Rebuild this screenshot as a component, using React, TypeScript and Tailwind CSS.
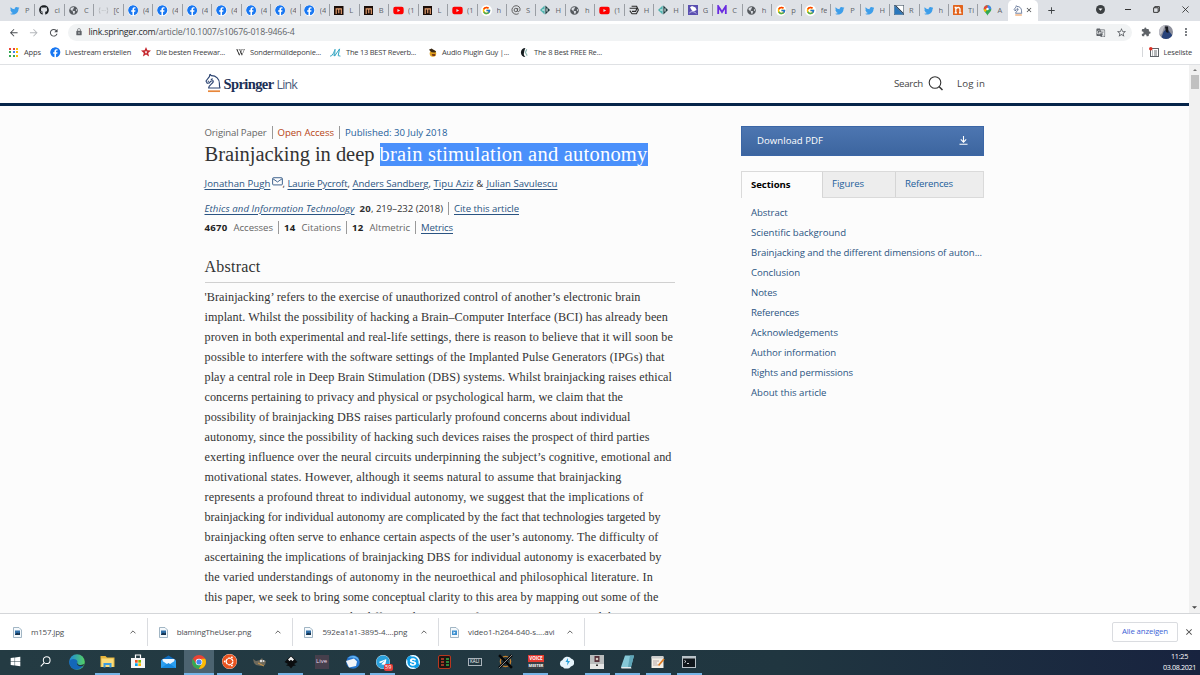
import { useLayoutEffect, useRef, type ReactNode } from "react";
import { FaGithub, FaFacebook, FaTwitter, FaYoutube, FaGlobeAmericas, FaWikipediaW, FaSkype, FaTelegram, FaUbuntu, FaWindows } from "react-icons/fa";
import { FcGoogle } from "react-icons/fc";
import { MdLock, MdExtension, MdStarBorder, MdGTranslate, MdMoreVert, MdArrowBack, MdArrowForward, MdRefresh, MdAdd, MdClose } from "react-icons/md";

const SERIF = "font-['Liberation_Serif',serif]";

/** Text tracked so that it fills exactly `w` pixels. */
function Fit({ w, className = "", children }: { w: number; className?: string; children: ReactNode }) {
  const ref = useRef<HTMLSpanElement>(null);
  useLayoutEffect(() => {
    const el = ref.current;
    if (!el) return;
    el.style.letterSpacing = "0px";
    const natural = el.getBoundingClientRect().width;
    const count = (el.textContent ?? "").length || 1;
    el.style.letterSpacing = `${(w - natural) / count}px`;
  }, [w, children]);
  return (
    <span className="inline-block shrink-0 whitespace-nowrap" style={{ width: w }}>
      <span ref={ref} className={`inline-block whitespace-pre ${className}`}>{children}</span>
    </span>
  );
}

const Knight = ({ className = "" }: { className?: string }) => (
  <svg viewBox="0 0 16 20" className={className} fill="none">
    <path d="M5 1.2 6.2 2.6C11 2.4 14.6 6 14.4 10.5c-.1 2 .1 3 .6 4.5H3.6c0-3.2 4.2-3.700 5-7M5 1.2 4.4 3.6 1 8l1.2 2.3 2.2-.4 1.4-1.7 2.7-.7M7.8 5.8l-2 .8M2.8 8.5l1-.4" stroke="#2c4472" strokeWidth="1.15" strokeLinejoin="round" />
    <path d="M3 18.2h12" stroke="#e8873a" strokeWidth="1.7" />
  </svg>
);

const MIcon = () => (
  <svg viewBox="0 0 10 10" className="size-[9.5px]">
    <rect width="10" height="10" fill="#1a0d08" />
    <path d="M2.300 8.500V3h5.400v5.500M5 3v4.500" stroke="#e8a070" strokeWidth="1.200" fill="none" />
  </svg>
);
const Diamond = () => (
  <svg viewBox="0 0 10 10" className="size-[10px]">
    <path d="M4.6.4v9.2L0 5z" fill="#4fb3ae" />
    <path d="M5.4.4v9.2L10 5z" fill="#18383b" />
    <path d="M2.2 5h2.2M7 3.4v3.2" stroke="#fff" />
  </svg>
);
const Poly = () => (
  <svg viewBox="0 0 10 10" className="size-[10px]" fill="none" stroke="#2b2b2b" strokeWidth="1.1">
    <path d="M2.600 1.200h5L9.400 5 7.400 8.800H3L.8 5.600M.6 3.200h7.400L6.600 6.400H3" />
  </svg>
);
const At = () => (
  <svg viewBox="0 0 10 10" className="size-[10px]" fill="none" stroke="#555" strokeWidth=".9">
    <circle cx="4.8" cy="5" r="1.7" />
    <path d="M6.8 3 6.4 6c.3 1 2 .8 2.6-.8C9.6 2.4 7.4.7 5 .7a4.3 4.3 0 1 0 2.6 7.9" />
  </svg>
);
const Ghost = () => (
  <svg viewBox="0 0 10 10" className="size-[10px]">
    <rect width="10" height="10" fill="#5a4fb0" />
    <path d="M2 2.200 4 1l3.500 1.600L8.600 5 6 6.200 4 5.800z" fill="#fff" />
    <path d="M1.400 8c2-2.200 5-1.600 7 .6" stroke="#cbc6f2" fill="none" />
  </svg>
);
const PurpleM = () => (
  <svg viewBox="0 0 10 10" className="size-[10px]"><path d="M1.2 9V1.2L5 7l3.8-5.8V9" stroke="#6a2be0" strokeWidth="1.8" fill="none" /></svg>
);
const Corner = () => (
  <svg viewBox="0 0 10 10" className="size-[10px]">
    <rect x=".3" y=".3" width="9.4" height="9.4" fill="#fff" stroke="#4a5a68" strokeWidth=".6" />
    <path d="M.5.500 9.500 9.500h-9z" fill="#2b78bd" /><path d="M.5.500 9.500 9.500V8L2 .5z" fill="#16324f" />
  </svg>
);
const OrangeN = () => (
  <svg viewBox="0 0 10 10" className="size-[10px]">
    <rect width="10" height="10" rx=".5" fill="#e2631c" />
    <path d="M1.6 2.500h1.200v5.400M2.800 4C4 2 7 2 7 4v3.900M1.600 7.800H4M6 7.800h2.400" stroke="#fff" strokeWidth="1.3" fill="none" />
  </svg>
);
const Pin = () => (
  <svg viewBox="0 0 10 12" className="h-[11px] w-[9px]">
    <path d="M5 .3C2.400.3.8 2.300.8 4.500.8 7.500 4.200 8.500 5 11.800 5.800 8.500 9.200 7.500 9.200 4.500 9.200 2.300 7.600.3 5 .3z" fill="#34a853" />
    <path d="M5 .3C7.600.3 9.200 2.300 9.200 4.500L5 4.500z" fill="#4285f4" />
    <path d="M5 .3C2.400.3.8 2.300.8 4.500L5 4.500z" fill="#ea4335" />
    <path d="M.8 4.500C.8 6 1.600 6.800 2.600 7.800L5 4.500z" fill="#fbbc04" />
    <circle cx="5" cy="4.300" r="1.400" fill="#fff" />
  </svg>
);
const Json = () => (
  <svg viewBox="0 0 12 8" className="h-[7px] w-[11px]" fill="none" stroke="#b5b8bc" strokeWidth=".9"><path d="M2.500 1H1.500v2.400L.7 4l.8.6V7h1M9.500 1h1v2.400l.8.600-.8.600V7h-1M4 4h1M6 4h1M8 4h.6" /></svg>
);
const Tw = () => <FaTwitter className="size-[9.5px] text-[#3d9eea]" />;
const Fb = () => <FaFacebook className="size-[10.5px] rounded-full bg-white text-[#1877f2]" />;
const Yt = () => <FaYoutube className="size-[11px] text-[#f00]" />;
const Goog = () => <span className="flex size-[10.5px] items-center justify-center rounded-full bg-white"><FcGoogle className="size-[9px]" /></span>;
const Globe = () => <FaGlobeAmericas className="size-[9px] text-[#55595e]" />;

const tabs: [() => ReactNode, string][] = [
  [Tw, "P"], [() => <FaGithub className="size-[10px] text-[#1b1f23]" />, "cl"], [Globe, "C"], [Json, "[C"],
  [Fb, "(4"], [Fb, "(4"], [Fb, "(4"], [Fb, "(4"], [Fb, "(4"], [Fb, "(4"], [Fb, "(4"],
  [MIcon, "L"], [MIcon, "B"], [Yt, "(1"], [MIcon, "L"], [Yt, "(1"], [Goog, "h"], [At, "S"], [Diamond, "H"],
  [Globe, "h"], [Yt, "(1"], [Poly, "H"], [Diamond, "H"], [Ghost, "G"], [PurpleM, "C"], [Globe, "h"],
  [Goog, "p"], [Goog, "fe"], [Tw, "P"], [Tw, "H"], [Corner, "R"], [Tw, "h"], [OrangeN, "Ti"], [Pin, "A"],
];

function TabStrip() {
  return (
    <div className="flex h-[21px] bg-[#dee1e6] pl-[6px]">
      <div className="flex">
        {tabs.map(([Icon, label], i) => (
          <div key={i} className="flex w-[29.48px] items-center pl-[3.5px]">
            <span className="flex w-[11px] shrink-0 justify-center"><Icon /></span>
            <span className="ml-[4.5px] w-[6px] overflow-hidden whitespace-nowrap text-[7.5px] text-[#5f6368]">{label}</span>
            {i < 33 && <span className="ml-auto h-[12px] w-px bg-[#9a9ea4]" />}
          </div>
        ))}
      </div>
      <div className="flex w-[30px] items-center justify-center gap-[2px] rounded-t-[5px] bg-white">
        <Knight className="h-[11px] w-[10px]" />
        <MdClose className="size-[8px] text-[#3c4043]" />
      </div>
      <MdAdd className="mt-[5px] ml-[8px] size-[11px] text-[#3c4043]" />
      <div className="ml-auto flex h-[19px] items-center">
        <svg viewBox="0 0 10 10" className="mr-[20px] size-[9px]"><circle cx="5" cy="5" r="5" fill="#3c4043" /><path d="m2.800 4 2.200 2.500L7.200 4z" fill="#fff" /></svg>
        <span className="mr-[22px] h-px w-[6px] bg-[#333]" />
        <svg viewBox="0 0 8 8" className="mr-[22px] size-[7px]" fill="none" stroke="#222"><path d="M2 2V.7h5.300V6H6M.7 2h5.200v5.300H.7z" /></svg>
        <svg viewBox="0 0 8 8" className="mr-[11px] size-[7px]" fill="none" stroke="#222" strokeWidth=".9"><path d="m.5.500 7 7m0-7-7 7" /></svg>
      </div>
    </div>
  );
}

function Toolbar() {
  return (
    <div className="flex h-[21px] items-center pt-[2px] text-[#5f6368]">
      <MdArrowBack className="ml-[8px] size-[11.5px] text-[#4a4d51]" />
      <MdArrowForward className="ml-[8px] size-[11.5px] text-[#b5b8bc]" />
      <MdRefresh className="ml-[9px] size-[11.5px] text-[#4a4d51]" />
      <div className="ml-[8px] flex h-[17px] w-[1064px] items-center rounded-full bg-[#f1f3f4] pl-[7px] text-[8.75px]">
        <MdLock className="size-[8px]" />
        <span className="ml-[6px] flex"><Fit w={67} className="text-[#27292c]">link.springer.com</Fit><Fit w={139}>/article/10.1007/s10676-018-9466-4</Fit></span>
        <MdGTranslate className="ml-auto size-[9.5px]" />
        <MdStarBorder className="mr-[5px] ml-[10px] size-[11px]" />
      </div>
      <MdExtension className="ml-[9px] size-[10px]" />
      <svg viewBox="0 0 14 14" className="ml-[8px] size-[14px]">
        <defs><clipPath id="avatar"><circle cx="7" cy="7" r="7" /></clipPath></defs>
        <g clipPath="url(#avatar)"><rect width="14" height="14" fill="#8d8f9b" /><path d="M0 0h6L3 8l-3 3z" fill="#bfc0c8" /><path d="M5 6l3-2 2 2 3 4v4H2l2-6z" fill="#27427a" /><path d="M6 1.500h3L9.500 8 7 7z" fill="#15171d" /></g>
      </svg>
      <MdMoreVert className="ml-[7px] size-[12px]" />
    </div>
  );
}

function Bookmark({ icon, label, w, cell, gap = 4 }: { icon: ReactNode; label: string; w: number; cell: number; gap?: number }) {
  return (
    <div className="flex shrink-0 items-center" style={{ width: cell, columnGap: gap }}>
      <span className="flex w-[11px] shrink-0 justify-center">{icon}</span>
      <Fit w={w}>{label}</Fit>
    </div>
  );
}

const appColors = ["#ea4335", "#ea4335", "#fbbc04", "#34a853", "#4285f4", "#fbbc04", "#34a853", "#34a853", "#fbbc04"];

function Bookmarks() {
  return (
    <div className="flex h-[23px] items-center border-b border-[#dfe1e4] pb-px pl-[8px] text-[7.5px] text-[#3c4043]">
      <Bookmark cell={42} w={17} gap={5} label="Apps" icon={<span className="grid grid-cols-3 gap-[1.5px]">{appColors.map((c, i) => <span key={i} className="size-[2px]" style={{ background: c }} />)}</span>} />
      <Bookmark cell={90} w={66} label="Livestream erstellen" icon={<Fb />} />
      <Bookmark cell={95} w={69} gap={5} label="Die besten Freewar..." icon={<svg viewBox="0 0 10 10" className="size-[10px]"><path d="m5 0 1.400 3.300 3.600.3-2.800 2.300.9 3.600L5 7.600 1.900 9.500l.9-3.600L0 3.600l3.600-.3z" fill="#c4262c" /><path d="m5 3.600.4 1 1 .1-.8.7.2 1-.8-.5-.8.500.2-1-.8-.7 1-.1z" fill="#fff" /></svg>} />
      <Bookmark cell={95} w={71} label="Sondermülldeponie..." icon={<FaWikipediaW className="size-[9px] text-black" />} />
      <Bookmark cell={97} w={70} gap={5} label="The 13 BEST Reverb..." icon={<svg viewBox="0 0 12 10" className="h-[9px] w-[11px]" fill="none" stroke="#2fa3c0" strokeWidth="1.1"><path d="M0 9c3 0 4-4 5.500-7.500L5 9l5.500-8L9 8.500l2.500.5M2 7l2 1" /></svg>} />
      <Bookmark cell={92} w={67} label="Audio Plugin Guy |..." icon={<svg viewBox="0 0 10 10" className="size-[9px]"><circle cx="5.5" cy="6" r="3.6" fill="#e0a020" /><path d="M1 2 4 .5l3 2 2 1L8 5 4 4.600z" fill="#3c2a14" /><path d="M4 7h4v1.500H5z" fill="#5a1b10" /></svg>} />
      <Bookmark cell={90} w={68} label="The 8 Best FREE Re..." icon={<svg viewBox="0 0 10 10" className="size-[9px]"><path d="M6 0C3 0 1 2 1 5s2 5 5 5C4 8 4 7 4.500 5S5 2 6 0z" fill="#161d20" /><path d="M7.500 1.500 6 5l2 3.500" stroke="#8fb8b2" strokeWidth="1.300" fill="none" /></svg>} />
      <span className="ml-auto h-[10px] w-px bg-[#d5d7da]" />
      <svg viewBox="0 0 10 10" className="ml-[6px] size-[10px]"><rect x="1.500" y="1.500" width="8" height="8" fill="#fff" stroke="#5f6368" /><path d="M3 4h1m1 0h3M3 6h1m1 0h3M3 8h1m1 0h3" stroke="#5f6368" strokeWidth=".9" /><circle cx="1.800" cy="1.800" r="1.800" fill="#d93025" /></svg>
      <span className="mr-[8px] ml-[5px]"><Fit w={28.5}>Leseliste</Fit></span>
    </div>
  );
}

const Bar = () => <span className="mx-[5px] h-[13px] w-px bg-[#999]" />;
const link = "underline underline-offset-[1.5px] decoration-[0.7px] text-[#2b5482]";

const abstractLines: [number, string][] = [
  [436, "'Brainjacking’ refers to the exercise of unauthorized control of another’s electronic brain"],
  [463.5, "implant. Whilst the possibility of hacking a Brain–Computer Interface (BCI) has already been"],
  [468.5, "proven in both experimental and real-life settings, there is reason to believe that it will soon be"],
  [460, "possible to interfere with the software settings of the Implanted Pulse Generators (IPGs) that"],
  [467.5, "play a central role in Deep Brain Stimulation (DBS) systems. Whilst brainjacking raises ethical"],
  [418.5, "concerns pertaining to privacy and physical or psychological harm, we claim that the"],
  [426, "possibility of brainjacking DBS raises particularly profound concerns about individual"],
  [445, "autonomy, since the possibility of hacking such devices raises the prospect of third parties"],
  [467, "exerting influence over the neural circuits underpinning the subject’s cognitive, emotional and"],
  [417, "motivational states. However, although it seems natural to assume that brainjacking"],
  [439, "represents a profound threat to individual autonomy, we suggest that the implications of"],
  [456, "brainjacking for individual autonomy are complicated by the fact that technologies targeted by"],
  [454, "brainjacking often serve to enhance certain aspects of the user’s autonomy. The difficulty of"],
  [457, "ascertaining the implications of brainjacking DBS for individual autonomy is exacerbated by"],
  [448.5, "the varied understandings of autonomy in the neuroethical and philosophical literature. In"],
  [454, "this paper, we seek to bring some conceptual clarity to this area by mapping out some of the"],
  [415, "prominent views concerning the different dimensions of autonomous agency, and the"],
];

const sections: [number, string][] = [
  [36.5, "Abstract"], [95, "Scientific background"], [231, "Brainjacking and the different dimensions of auton..."], [49, "Conclusion"],
  [26, "Notes"], [48, "References"], [87, "Acknowledgements"], [85, "Author information"], [102, "Rights and permissions"], [75.5, "About this article"],
];

function Article() {
  return (
    <main className="w-[470px] text-[9.6px] text-[#333]">
      <div className="flex h-[14px] items-center">
        <Fit w={62} className="text-[#666]">Original Paper</Fit><Bar />
        <Fit w={56.5} className="text-[#b74616]">Open Access</Fit><Bar />
        <Fit w={102.5} className="text-[#24609b]">Published: 30 July 2018</Fit>
      </div>
      <h1 className={`mt-[3px] flex h-[24px] items-center text-[20.5px] leading-[23px] text-[#333] ${SERIF}`}>
        <Fit w={175}>Brainjacking in deep </Fit>
        <span className="flex h-[23px] items-center bg-[#4a90fb] text-white"><Fit w={268}>brain stimulation and autonomy</Fit></span>
      </h1>
      <div className="mt-[9px] flex h-[16px] items-center">
        <Fit w={66} className={link}>Jonathan Pugh</Fit>
        <svg viewBox="0 0 12 10" className="mb-[4px] ml-[1px] h-[9px] w-[11px] shrink-0" fill="none" stroke="#2b5482"><rect x=".6" y=".8" width="10.8" height="8" rx="1" /><path d="m1 2 5 3.500L11 2" /></svg>
        <Fit w={5}>, </Fit><Fit w={60} className={link}>Laurie Pycroft</Fit><Fit w={5}>, </Fit>
        <Fit w={76} className={link}>Anders Sandberg</Fit><Fit w={5}>, </Fit>
        <Fit w={40} className={link}>Tipu Aziz</Fit><Fit w={13}> &amp; </Fit><Fit w={71} className={link}>Julian Savulescu</Fit>
      </div>
      <div className="mt-[9px] flex h-[16px] items-center">
        <Fit w={150} className={`italic ${link}`}>Ethics and Information Technology</Fit>
        <span className="ml-[5px]"><Fit w={11.5} className="font-bold">20</Fit></span>
        <Fit w={72}>, 219–232 (2018)</Fit><Bar /><Fit w={65} className={link}>Cite this article</Fit>
      </div>
      <div className="mt-[3px] flex h-[16px] items-center text-[#666]">
        <Fit w={23} className="font-bold text-[#222]">4670</Fit><span className="ml-[6px]"><Fit w={39.5}>Accesses</Fit></span><Bar />
        <Fit w={11.5} className="font-bold text-[#222]">14</Fit><span className="ml-[6px]"><Fit w={39.5}>Citations</Fit></span><Bar />
        <Fit w={11.5} className="font-bold text-[#222]">12</Fit><span className="ml-[6px]"><Fit w={40.5}>Altmetric</Fit></span><Bar />
        <Fit w={32} className={link}>Metrics</Fit>
      </div>
      <h2 className={`mt-[22px] flex h-[25px] items-center border-b border-[#d0d0d0] pb-[5px] text-[16px] ${SERIF}`}>
        <Fit w={56}>Abstract</Fit>
      </h2>
      <div className={`mt-[4px] text-[12.2px] ${SERIF}`}>
        {abstractLines.map(([w, text]) => (
          <p key={text} className="flex h-[20px] items-center"><Fit w={w}>{text}</Fit></p>
        ))}
      </div>
    </main>
  );
}

function Sidebar() {
  return (
    <aside className="w-[243px] text-[9.6px] text-[#2b5482]">
      <button className="flex h-[30px] w-full items-center border border-[#3b66a6] bg-gradient-to-b from-[#4d76b1] to-[#3c659f] px-[15px] text-white">
        <Fit w={66}>Download PDF</Fit>
        <svg viewBox="0 0 10 10" className="ml-auto size-[9px]" fill="none" stroke="#fff" strokeWidth="1.200"><path d="M5 0v6.500M2 3.800l3 3 3-3M.5 9.200h9" /></svg>
      </button>
      <div className="mt-[15px] flex h-[27px] border border-[#dadada]">
        <div className="-mb-px flex w-[80px] items-center bg-[#fcfcfc] pl-[9px]"><Fit w={39.5} className="font-bold text-black">Sections</Fit></div>
        <div className="flex w-[73px] items-center border-l border-[#d5d5d5] bg-[#ededed] pl-[9px] text-[#24609b]"><Fit w={32}>Figures</Fit></div>
        <div className="flex flex-1 items-center border-l border-[#d5d5d5] bg-[#ededed] pl-[9px] text-[#24609b]"><Fit w={48}>References</Fit></div>
      </div>
      <ul className="mt-[5px] pl-[10px]">
        {sections.map(([w, label]) => <li key={label} className="flex h-[20px] items-center"><Fit w={w}>{label}</Fit></li>)}
      </ul>
    </aside>
  );
}

function Page() {
  return (
    <div className="flex h-[549px] overflow-hidden bg-[#fcfcfc]">
      <div className="w-[1189px]">
        <header className="flex h-[41px] items-center border-b-[3px] border-[#06254a] bg-white pl-[204.5px]">
          <Knight className="mb-[2px] h-[20px] w-[16px]" />
          <span className="ml-[3px] flex items-baseline text-[#1b2f55]">
            <span className={SERIF}><Fit w={50} className="text-[14.5px] font-bold">Springer</Fit></span>
            <span className="ml-[3px] text-[12.5px] text-[#4a5b7a]"><Fit w={20.5}>Link</Fit></span>
          </span>
          <span className="ml-auto text-[9.7px] text-[#444]"><Fit w={29}>Search</Fit></span>
          <svg viewBox="0 0 15 15" className="ml-[5px] size-[15px]" fill="none" stroke="#333" strokeWidth="1.100"><circle cx="7" cy="6.500" r="5.800" /><path d="m11 10.500 3.500 3.500" strokeWidth="1.500" /></svg>
          <span className="mr-[204px] ml-[14px] text-[9.7px] text-[#444]"><Fit w={28}>Log in</Fit></span>
        </header>
        <div className="flex pl-[204.5px]">
          <div className="pt-[20px]"><Article /></div>
          <div className="ml-[66.5px] pt-[20px]"><Sidebar /></div>
        </div>
      </div>
      <div className="flex flex-1 flex-col items-center justify-between bg-[#f1f1f1] py-[4px]">
        <div className="flex flex-col items-center gap-[4px]">
          <svg viewBox="0 0 4 2" className="h-[2px] w-[4px]"><path d="M0 2 2 0l2 2z" fill="#777" /></svg>
          <span className="h-[14px] w-[8px] bg-[#c1c1c1]" />
        </div>
        <svg viewBox="0 0 4 2" className="h-[3px] w-[5px]"><path d="m0 0 2 2 2-2z" fill="#444" /></svg>
      </div>
    </div>
  );
}

const downloads: [string, number][] = [["m157.jpg", 33], ["blamingTheUser.png", 74.5], ["592ea1a1-3895-4....png", 85], ["video1-h264-640-s....avi", 86.5]];

function Downloads() {
  return (
    <div className="flex h-[37px] items-center border-t border-[#d4d6d9] bg-white pl-[2px] text-[8px] text-[#4a4d51]">
      {downloads.map(([name, w], i) => (
        <div key={name} className="flex h-[28px] w-[145.7px] items-center border-r border-[#dadce0] pl-[11px]">
          <svg viewBox="0 0 9 11" className="mr-[9px] h-[11px] w-[9px]">
            <path d="M.5.500h5.500L8.500 3v7.500h-8z" fill="#f5f9fc" stroke="#8ba3b5" strokeWidth=".8" />
            <rect x="2" y="3.500" width="5" height="4.500" fill={i === 3 ? "#3b8fd0" : "#2f6fa8"} />
            <path d={i === 3 ? "m3.500 4.500 2 1.200-2 1.200z" : "M2 7.500 4 5.500l1.200 1 1.800-1V8H2z"} fill={i === 3 ? "#fff" : "#17344f"} />
          </svg>
          <Fit w={w}>{name}</Fit>
          <svg viewBox="0 0 8 5" className="mr-[11px] ml-auto h-[4px] w-[6px]" fill="none" stroke="#555" strokeWidth="1.200"><path d="m.7 4.300 3.300-3.300 3.300 3.300" /></svg>
        </div>
      ))}
      <div className="ml-auto flex h-[20px] w-[66px] items-center justify-center rounded-[2px] border border-[#dadce0] text-[7.8px] text-[#3c5fd6]"><Fit w={46}>Alle anzeigen</Fit></div>
      <MdClose className="mr-[6px] ml-[6px] size-[10px] text-[#444]" />
    </div>
  );
}

const taskIcons: ReactNode[] = [
  <FaWindows className="size-[11px] text-white" />,
  <svg viewBox="0 0 12 12" className="size-[11px]" fill="none" stroke="#fff" strokeWidth="1.100"><circle cx="7.300" cy="4.500" r="3.700" /><path d="M4.700 7.300.8 11.400" /></svg>,
  <svg viewBox="0 0 16 16" className="size-[16px]"><defs><linearGradient id="edge" x2="1" y2="0"><stop stopColor="#1e88dc" /><stop offset="1" stopColor="#54d162" /></linearGradient></defs><circle cx="8" cy="8" r="7.800" fill="url(#edge)" /><path d="M.3 8C1 4.500 7 4 8.500 7.500c-2 2 0 4.500 5.500 4.500-4 5.500-13 4.500-13.700-4z" fill="#1467b8" /><path d="M8.700 7.300c-1.500 2 .5 4 3.300 3.700l3.500-1c-.5 1.800-2 2.500-4.500 2.300-3-.3-4-3.300-2.300-5z" fill="#20343e" /></svg>,
  <svg viewBox="0 0 15 13" className="h-[13px] w-[15px]"><path d="M.5 1h5l1.500 1.500h7.500V12H.5z" fill="#e8b53c" /><path d="M1.500 3.500h12V12h-12z" fill="#fbdc7b" /><path d="M3.500 8h8v4.500h-2V10h-4v2.500h-2z" fill="#3a9be0" /></svg>,
  <svg viewBox="0 0 14 15" className="h-[15px] w-[14px]"><path d="M4.500 4V1h5v3" stroke="#fff" strokeWidth="1.200" fill="none" /><path d="M0 4h14v10H0z" fill="#f5f5f5" /><path d="M4 6h2.700v2.700H4z" fill="#f25022" /><path d="M7.300 6H10v2.700H7.300z" fill="#7fba00" /><path d="M4 9.300h2.700V12H4z" fill="#00a4ef" /><path d="M7.300 9.300H10V12H7.300z" fill="#ffb900" /></svg>,
  <svg viewBox="0 0 15 13" className="h-[13px] w-[15px]"><path d="M0 5 7.500.5 15 5v8H0z" fill="#0f6cbd" /><path d="M1.500 4h12v5h-12z" fill="#e9f5ff" /><path d="m0 5 7.500 5L15 5v8H0z" fill="#2b9ff0" /><path d="m0 13 7.500-5 7.500 5z" fill="#168ae0" /></svg>,
  <svg viewBox="0 0 14 14" className="size-[14px]"><circle cx="7" cy="7" r="7" fill="#ea4335" /><path d="M.9 3.600A7 7 0 0 0 6.800 14L10 8.500 4 8.500z" fill="#34a853" /><path d="M13.200 3.800A7 7 0 0 1 6.800 14L10 8.500 9.500 3.800z" fill="#fbbc04" /><circle cx="7" cy="7" r="3.300" fill="#fff" /><circle cx="7" cy="7" r="2.600" fill="#4285f4" /></svg>,
  <span className="flex size-[15px] items-center justify-center rounded-full bg-white"><FaUbuntu className="size-[15px] text-[#e95420]" /></span>,
  <svg viewBox="0 0 14 10" className="h-[10px] w-[14px]"><path d="m0 2 3 2 4-1 2-2 1 2 3 1-1 4-4 1-5-1-2-2z" fill="#6f6a5c" /><circle cx="8" cy="4" r="1.200" fill="#ddd" /><circle cx="10.500" cy="4" r="1" fill="#ddd" /><path d="m5 6 6 3" stroke="#d09a48" /></svg>,
  <svg viewBox="0 0 14 14" className="size-[14px]"><path d="M7 .5 13.500 7 10 9l2 1.500L9 11l-2 2.500L5 11l-3-.5L4 9 .5 7z" fill="#0b0d0f" /><path d="M7 1.500 10 4.500 8.500 6 7 4.800 5.500 6 4 4.500z" fill="#f0f0f0" /></svg>,
  <span className="flex h-[14px] w-[14px] items-center justify-center bg-[#463f4c] text-[6px] text-[#e8dcec]">Live</span>,
  <svg viewBox="0 0 15 14" className="h-[14px] w-[15px]"><circle cx="8" cy="7" r="6.800" fill="#2676cf" /><path d="M1 6 9 3.500l3 3-1 4.500-7 1.500z" fill="#f2f5f8" /><path d="M3 3C6 0 13 0 14 6c-3-4-7-4-11-3z" fill="#63b4f0" /></svg>,
  <span className="relative"><FaTelegram className="size-[14px] rounded-full bg-white text-[#2aa1dc]" /><span className="absolute -right-[3px] -bottom-[2px] rounded-[2px] bg-[#e23b3b] px-[1.5px] text-[5.5px] leading-[7px] text-white">59</span></span>,
  <span className="flex size-[14px] items-center justify-center rounded-full bg-[#0f9ee8]"><FaSkype className="size-[14px] rounded-full bg-white text-[#0f9ee8]" /></span>,
  <svg viewBox="0 0 13 14" className="h-[14px] w-[13px]"><rect x=".5" y=".5" width="12" height="13" rx="1.500" fill="#1b1512" stroke="#b8361f" /><path d="M3 4h3M3 7h3M3 10h3" stroke="#c7442e" strokeWidth="1.300" /><path d="M8 4h3M8 7h3M8 10h3" stroke="#35b04a" strokeWidth="1.300" /></svg>,
  <span className="flex h-[8px] w-[14px] items-center justify-center border border-[#aab4bb] text-[4.5px] leading-none text-white">KALI</span>,
  <svg viewBox="0 0 14 14" className="size-[15px]"><circle cx="7" cy="7" r="4.800" fill="none" stroke="#c38030" strokeWidth="1.200" /><path d="m1 1 12 12M13 1 1 13" stroke="#060606" strokeWidth="2.400" /><path d="M13 1 1 13" stroke="#ddd" strokeWidth=".6" /></svg>,
  <span className="flex h-[14px] w-[16px] flex-col text-center text-[4.5px] leading-[7px] font-bold text-white"><span className="bg-[#e53a30]">VOICE</span><span className="bg-[#3a3f44] text-[3.8px]">MEETER</span></span>,
  <svg viewBox="0 0 15 14" className="h-[14px] w-[15px]"><path d="M4 12a3.600 3.600 0 0 1-.5-7A5 5 0 0 1 12 3.500a4 4 0 0 1 1 7.500c-2 .5-2 3-5 2.500-2 0-3 .5-4-1.500z" fill="#e6f4fb" /><path d="M9 3 6.500 7h2L8 10.500l3-4.500H9z" fill="#2aa0d8" /></svg>,
  <svg viewBox="0 0 14 14" className="size-[14px]"><path d="M0 0h14v14H0z" fill="#b9bcbd" /><path d="M0 9h14v5H0z" fill="#e4e5e5" /><path d="M4.500 1h5v6h-5z" fill="#55303a" /><circle cx="7" cy="4" r="1.300" fill="#d8c9c2" /><path d="M6 9.500h2v1.500H6z" fill="#333" /></svg>,
  <svg viewBox="0 0 15 14" className="h-[14px] w-[15px]"><path d="M5 .5h9L11 12H1z" fill="#86c9d8" /><path d="M10 .5h4L11 12H8z" fill="#5fa6b8" /><path d="M1 12h10l.5 1.500H1.500z" fill="#e5ecee" /></svg>,
  <svg viewBox="0 0 14 14" className="size-[14px]"><path d="M.5 2h12v11H.5z" fill="#f4efe6" /><path d="M.5 1h12v2.500H.5z" fill="#ccc" /><path d="M2 6h6M2 8h4M2 10h5" stroke="#a99" strokeWidth=".8" /><path d="m13 4-5.500 6.500" stroke="#dd7c24" strokeWidth="1.800" /></svg>,
  <svg viewBox="0 0 14 12" className="h-[12px] w-[14px]"><rect x=".5" y=".5" width="13" height="11" fill="#10161b" stroke="#b9c2c8" /><path d="M.5.500h13V2.500H.5z" fill="#b9c2c8" /><path d="m2.500 4.500 1.500 1-1.500 1M5 7.500h2" stroke="#fff" strokeWidth=".8" fill="none" /></svg>,
];
const running = new Set([3, 6, 7, 9, 11, 12, 17, 19, 20, 21, 22]);

function Taskbar() {
  return (
    <div className="flex h-[25px] bg-gradient-to-r from-[#243b43] via-[#203640] via-65% to-[#18233f]">
      {taskIcons.map((icon, i) => (
        <div key={i} className={`flex h-full w-[30.64px] shrink-0 flex-col items-center ${i === 6 ? "bg-[#4c6370]" : ""}`}>
          <span className="flex flex-1 items-center">{icon}</span>
          <span className={`h-[2px] ${i === 6 ? "w-full" : "w-[25px]"} ${running.has(i) ? "bg-[#76b4e6]" : ""}`} />
        </div>
      ))}
      <div className="mr-[4px] ml-auto flex flex-col items-center justify-center pb-px text-[7.2px] leading-[11px] text-white"><Fit w={17}>11:25</Fit><Fit w={33}>03.08.2021</Fit></div>
    </div>
  );
}

export default function App() {
  return (
    <div className="flex h-[675px] w-[1200px] flex-col overflow-hidden bg-white font-['Open_Sans','Noto_Sans',sans-serif] leading-normal">
      <TabStrip />
      <Toolbar />
      <Bookmarks />
      <Page />
      <Downloads />
      <Taskbar />
    </div>
  );
}
